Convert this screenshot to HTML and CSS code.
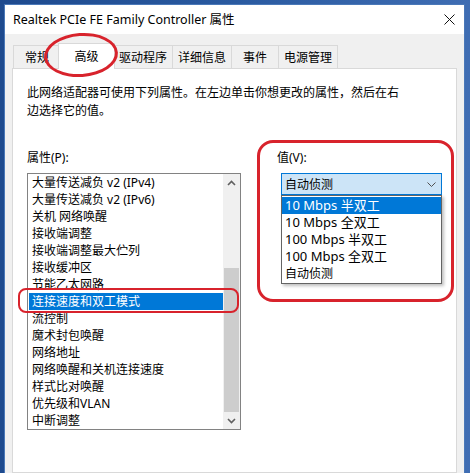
FILE: index.html
```html
<!DOCTYPE html>
<html lang="zh-CN">
<head>
  <meta charset="UTF-8">
  <title>Realtek PCIe FE Family Controller 属性</title>
  <link rel="stylesheet" href="styles.css">
</head>
<body>
  <div class="window">
    <div class="titlebar">
      <span class="title">Realtek PCIe FE Family Controller 属性</span>
      <svg class="close" width="11" height="11" viewBox="0 0 11 11">
        <path d="M0.5 0.5 L10.5 10.5 M10.5 0.5 L0.5 10.5" stroke="#111" stroke-width="1" fill="none"/>
      </svg>
    </div>
    <div class="content">
      <div class="tabs">
        <div class="tab">常规</div>
        <div class="tab active">高级</div>
        <div class="tab">驱动程序</div>
        <div class="tab">详细信息</div>
        <div class="tab">事件</div>
        <div class="tab">电源管理</div>
      </div>
      <div class="panel">
        <p class="desc">此网络适配器可使用下列属性。在左边单击你想更改的属性，然后在右边选择它的值。</p>
        <div class="columns">
          <div class="col-left">
            <div class="label">属性(P):</div>
            <div class="listbox">
              <ul class="items">
                <li>大量传送减负 v2 (IPv4)</li>
                <li>大量传送减负 v2 (IPv6)</li>
                <li>关机 网络唤醒</li>
                <li>接收端调整</li>
                <li>接收端调整最大伫列</li>
                <li>接收缓冲区</li>
                <li>节能乙太网路</li>
                <li class="selected">连接速度和双工模式</li>
                <li>流控制</li>
                <li>魔术封包唤醒</li>
                <li>网络地址</li>
                <li>网络唤醒和关机连接速度</li>
                <li>样式比对唤醒</li>
                <li>优先级和VLAN</li>
                <li>中断调整</li>
              </ul>
              <div class="scrollbar">
                <div class="sb-btn">
                  <svg width="9" height="6" viewBox="0 0 9 6"><path d="M1 5 L4.5 1.5 L8 5" stroke="#606060" stroke-width="1.6" fill="none"/></svg>
                </div>
                <div class="sb-track"><div class="sb-thumb"></div></div>
                <div class="sb-btn">
                  <svg width="9" height="6" viewBox="0 0 9 6"><path d="M1 1 L4.5 4.5 L8 1" stroke="#606060" stroke-width="1.6" fill="none"/></svg>
                </div>
              </div>
            </div>
          </div>
          <div class="col-right">
            <div class="label">值(V):</div>
            <div class="combo">
              <div class="combo-box">
                <span>自动侦测</span>
                <svg width="9" height="5" viewBox="0 0 9 5"><path d="M0.5 0.5 L4.5 4.5 L8.5 0.5" stroke="#505050" stroke-width="1" fill="none"/></svg>
              </div>
              <ul class="dropdown">
                <li class="selected">10 Mbps 半双工</li>
                <li>10 Mbps 全双工</li>
                <li>100 Mbps 半双工</li>
                <li>100 Mbps 全双工</li>
                <li>自动侦测</li>
              </ul>
            </div>
          </div>
        </div>
      </div>
    </div>
  </div>

  <!-- red annotation marks drawn over the dialog -->
  <div class="mark mark-tab"></div>
  <div class="mark mark-item"></div>
  <div class="mark mark-value"></div>
</body>
</html>
```

FILE: styles.css
```css
body {
  margin: 0;
  height: 473px;
  overflow: hidden;
  background: linear-gradient(90deg, #1e4a8e 0%, #2a5aa0 50%, #3f6db3 100%);
  font-family: "Noto Sans", "Noto Sans CJK SC", sans-serif;
  font-size: 12px;
  color: #000;
}
.window {
  margin: 4px 5px 0 4px;
  height: 468px;
  overflow: hidden;
  background: #f0f0f0;
  border: 1px solid #4a78b8;
  border-bottom: none;
}
.titlebar {
  height: 29px;
  background: #fff;
  display: flex;
  align-items: center;
  justify-content: space-between;
  padding: 0 8px 0 8px;
}
.title {
  font-size: 12.5px;
  line-height: 29px;
}
.close {
  margin-right: 1px;
}
.content {
  padding: 9px 7px 0 7px;
}
.tabs {
  display: flex;
  align-items: flex-end;
  padding-left: 1px;
  height: 25px;
}
.tab {
  height: 23px;
  line-height: 23px;
  min-width: 48px;
  box-sizing: border-box;
  padding: 0 5px;
  text-align: center;
  background: #f0f0f0;
  border: 1px solid #d9d9d9;
  border-bottom: none;
  margin-right: -1px;
}
.tab.active {
  height: 26px;
  min-width: 57px;
  line-height: 25px;
  background: #fff;
  margin: 0 -2px -1px -2px;
  position: relative;
  z-index: 1;
}
.panel {
  background: #fff;
  border: 1px solid #d9d9d9;
  height: 388px;
  padding: 15px 14px 0 14px;
}
.desc {
  margin: 0;
  width: 380px;
  line-height: 18px;
}
.columns {
  display: flex;
  margin-top: 29px;
}
.label {
  line-height: 18px;
}
.col-left {
  width: 216px;
}
.listbox {
  margin-top: 6px;
  height: 255px;
  border: 1px solid #828282;
  display: flex;
}
.items {
  list-style: none;
  margin: 0;
  padding: 0 0 0 1px;
  flex: 1;
}
.items li {
  height: 17px;
  line-height: 17px;
  padding-left: 3px;
  white-space: nowrap;
}
.items li.selected,
.dropdown li.selected {
  background: #0078d7;
  color: #fff;
}
.scrollbar {
  width: 17px;
  background: #f0f0f0;
  display: flex;
  flex-direction: column;
}
.sb-btn {
  height: 17px;
  display: flex;
  align-items: center;
  justify-content: center;
}
.sb-track {
  flex: 1;
  display: flex;
  flex-direction: column;
  justify-content: flex-end;
}
.sb-thumb {
  height: 144px;
  margin: 0 1px;
  background: #cdcdcd;
}
.col-right {
  margin-left: 36px;
}
.combo {
  margin: 6px 0 0 4px;
  width: 161px;
  position: relative;
}
.combo-box {
  height: 22px;
  box-sizing: border-box;
  background: #cce4f7;
  border: 1px solid #0078d7;
  display: flex;
  align-items: center;
  justify-content: space-between;
  padding: 0 5px 0 3px;
}
.dropdown {
  position: absolute;
  top: 22px;
  left: 0;
  width: 161px;
  box-sizing: border-box;
  list-style: none;
  margin: 0;
  padding: 1px 0 1px 0;
  background: #fff;
  border: 1px solid #646464;
  box-shadow: 2px 2px 3px rgba(0, 0, 0, 0.25);
  z-index: 2;
}
.dropdown li {
  height: 17px;
  line-height: 17px;
  padding-left: 3px;
  font-size: 13px;
}
.dropdown li:last-child {
  font-size: 12px;
}
.mark {
  position: absolute;
  border: 3px solid #d8232c;
  box-sizing: border-box;
  z-index: 5;
}
.mark-tab {
  left: 44px;
  top: 33px;
  width: 74px;
  height: 44px;
  border-radius: 50%;
  transform: rotate(-4deg);
}
.mark-item {
  left: 18px;
  top: 288px;
  width: 221px;
  height: 25px;
  border-radius: 8px;
  border-width: 2.5px;
}
.mark-value {
  left: 257px;
  top: 140px;
  width: 197px;
  height: 162px;
  border-radius: 16px;
}
```
